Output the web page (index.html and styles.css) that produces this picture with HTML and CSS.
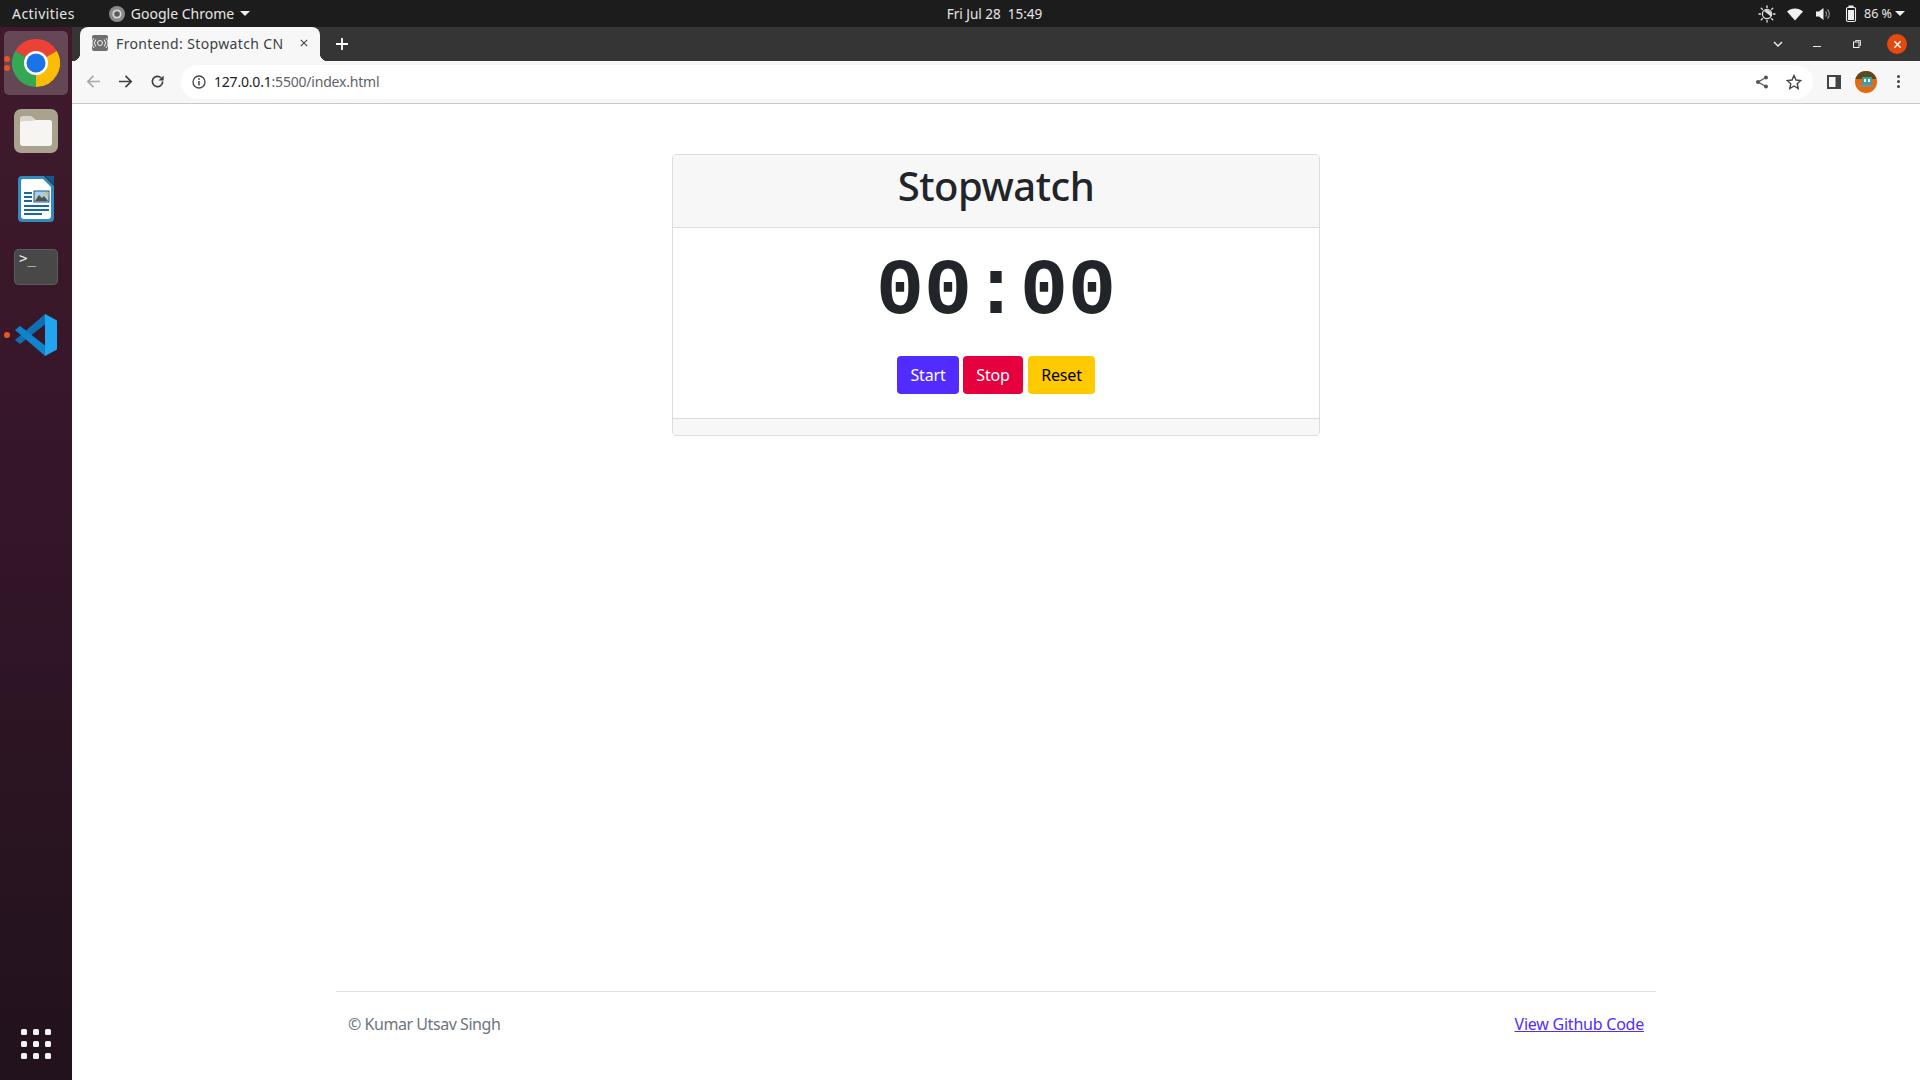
FILE: index.html
```html
<!DOCTYPE html>
<html lang="en">
<head>
<meta charset="utf-8">
<title>Frontend: Stopwatch CN</title>
<link rel="stylesheet" href="styles.css">
</head>
<body>
<header class="topbar">
  <div class="top-left">
    <span class="activities">Activities</span>
    <span class="app-menu">
      <svg class="app-icon" viewBox="0 0 16 16"><circle cx="8" cy="8" r="8" fill="#8a8a8a"/><circle cx="8" cy="8" r="4.600" fill="#d8d8d8"/><circle cx="8" cy="8" r="2.800" fill="#5a5a5a"/></svg>
      Google Chrome
      <i class="caret"></i>
    </span>
  </div>
  <div class="clock">Fri Jul 28&nbsp;&nbsp;15:49</div>
  <div class="tray">
    <svg class="tray-icon" viewBox="0 0 18 18"><g stroke="#ddd" stroke-width="1.400" stroke-linecap="round"><path d="M9 1v1.500M9 15.500v1.500M1 9h1.500M15.500 9H17M3.300 3.300l1 1M13.700 13.700l1 1M3.300 14.700l1-1M13.700 4.300l1-1"/></g><circle cx="9" cy="9" r="4.600" fill="none" stroke="#ddd" stroke-width="1.300"/><path d="M6 6a4.600 4.600 0 0 1 7 5.500z" fill="#ddd"/></svg>
    <svg class="tray-icon" viewBox="0 0 18 18"><path d="M1 6.500C5.500 2.500 12.500 2.500 17 6.500L9 15.500z" fill="#f2f2f2"/></svg>
    <svg class="tray-icon" viewBox="0 0 18 18"><path d="M2 6.500h3L9.500 3v12L5 11.500H2z" fill="#eee"/><path d="M11.500 6.500a3.500 3.500 0 0 1 0 5M13.500 4.500a6.500 6.500 0 0 1 0 9" fill="none" stroke="#999" stroke-width="1.100"/></svg>
    <svg class="tray-icon" viewBox="0 0 18 18"><rect x="6.500" y="0.500" width="5" height="2" fill="#eee"/><rect x="4.500" y="2.500" width="9" height="14" rx="1.500" fill="none" stroke="#eee" stroke-width="1.100"/><rect x="6" y="5" width="6" height="10" fill="#eee"/></svg>
    <span class="battery">86 %</span>
    <i class="caret"></i>
  </div>
</header>

<div class="desktop">
  <nav class="dock">
    <div class="dock-apps">
      <div class="dock-item dock-active">
        <span class="pips"><i></i><i></i></span>
        <svg class="chrome-logo" viewBox="0 0 48 48">
          <path d="M24 24 L44.800 12 A24 24 0 0 0 3.200 12z" fill="#ea4335"/>
          <path d="M24 24 L3.200 12 A24 24 0 0 0 24 48z" fill="#34a853"/>
          <path d="M24 24 L24 48 A24 24 0 0 0 44.800 12z" fill="#fbbc04"/>
          <circle cx="24" cy="24" r="12" fill="#fff"/>
          <circle cx="24" cy="24" r="9.500" fill="#1a73e8"/>
        </svg>
      </div>
      <div class="dock-item">
        <svg class="files-logo" viewBox="0 0 44 44">
          <rect width="44" height="44" rx="7" fill="#a8a28f"/>
          <path d="M6 10a3 3 0 0 1 3-3h8l5 4h13a3 3 0 0 1 3 3v6H6z" fill="#d9d5c9"/>
          <path d="M6 15a3 3 0 0 1 3-3h9l4-1h13a3 3 0 0 1 3 3v20a3 3 0 0 1-3 3H9a3 3 0 0 1-3-3z" fill="#f6f5f2"/>
        </svg>
      </div>
      <div class="dock-item">
        <svg class="writer-logo" viewBox="0 0 36 46">
          <path d="M4 0h22l10 10v32a4 4 0 0 1-4 4H4a4 4 0 0 1-4-4V4a4 4 0 0 1 4-4z" fill="#2f8cbd"/>
          <path d="M5 3h20l8 8v29a3 3 0 0 1-3 3H6a3 3 0 0 1-3-3V5a2 2 0 0 1 2-2z" fill="#fff"/>
          <path d="M27 0h9v9z" fill="#185a85"/>
          <g fill="#18699c">
            <rect x="6" y="16" width="8" height="2"/><rect x="6" y="20" width="8" height="2"/><rect x="6" y="24" width="8" height="2"/>
            <rect x="6" y="29" width="25" height="2"/><rect x="6" y="33" width="25" height="2"/><rect x="6" y="37" width="18" height="2"/>
          </g>
          <rect x="16" y="15" width="15" height="11" fill="#a8cfe4" stroke="#185a85"/>
          <path d="M17 25l4-6 3 3 2-2 4 5z" fill="#57504a"/>
          <path d="M27 16h3.500v4z" fill="#e8b93c"/>
        </svg>
      </div>
      <div class="dock-item">
        <div class="terminal-logo">&gt;_</div>
      </div>
      <div class="dock-item">
        <span class="pips pips-single"><i></i></span>
        <svg class="vscode-logo" viewBox="0 0 42 42">
          <path d="M30 0v10.500L5 30 0 26z" fill="#0f6fb0"/>
          <path d="M0 16l5-4 25 19.500V42z" fill="#0f84cc"/>
          <path d="M30 0l12 6.500v29L30 42z" fill="#22a5ef"/>
        </svg>
      </div>
    </div>
    <div class="app-grid"><i></i><i></i><i></i><i></i><i></i><i></i><i></i><i></i><i></i></div>
  </nav>

  <div class="browser">
    <div class="tabstrip">
      <div class="tab">
        <svg class="favicon" viewBox="0 0 16 16"><rect width="16" height="16" rx="2" fill="#6e6e6e"/><g fill="none" stroke="#eee" stroke-width="1"><circle cx="8" cy="8" r="2.500"/><path d="M3.800 4.500a5.500 5.500 0 0 0 0 7M12.200 4.500a5.500 5.500 0 0 1 0 7M2 3a8 8 0 0 0 0 10M14 3a8 8 0 0 1 0 10"/></g></svg>
        <span class="tab-title">Frontend: Stopwatch CN</span>
        <svg class="tab-close" viewBox="0 0 10 10"><path d="M1 1l8 8M9 1l-8 8" stroke="#444" stroke-width="1.400"/></svg>
      </div>
      <svg class="new-tab" viewBox="0 0 12 12"><path d="M6 0v12M0 6h12" stroke="#fff" stroke-width="1.800"/></svg>
      <div class="win-controls">
        <svg class="win-chevron" viewBox="0 0 10 6"><path d="M1 1l4 4 4-4" fill="none" stroke="#e8e8e8" stroke-width="1.500"/></svg>
        <span class="win-min"></span>
        <svg class="win-restore" viewBox="0 0 8 8"><path d="M2.500 1.500V.5h5v5h-1" fill="none" stroke="#ddd"/><rect x=".5" y="2" width="5.500" height="5.500" fill="none" stroke="#eee"/></svg>
        <span class="win-close"><svg viewBox="0 0 10 10"><path d="M1.500 1.500l7 7M8.500 1.500l-7 7" stroke="#fff" stroke-width="1.500"/></svg></span>
      </div>
    </div>

    <div class="toolbar">
      <svg class="tool-icon dim" viewBox="0 0 16 16"><path d="M15 8H2M8 2L2 8l6 6" fill="none" stroke="currentColor" stroke-width="1.800"/></svg>
      <svg class="tool-icon" viewBox="0 0 16 16"><path d="M1 8h13M8 2l6 6-6 6" fill="none" stroke="currentColor" stroke-width="1.800"/></svg>
      <svg class="tool-icon" viewBox="0 0 16 16"><path d="M13.500 8A5.500 5.500 0 1 1 11.800 4" fill="none" stroke="currentColor" stroke-width="1.800"/><path d="M14.500 1.500V7H9z" fill="currentColor"/></svg>
      <div class="omnibox">
        <svg class="info-icon" viewBox="0 0 14 14"><circle cx="7" cy="7" r="6" fill="none" stroke="#444" stroke-width="1.300"/><path d="M7 6v4.500" stroke="#444" stroke-width="1.500"/><circle cx="7" cy="4" r=".9" fill="#444"/></svg>
        <span class="url"><b>127.0.0.1</b>:5500/index.html</span>
        <svg class="omni-share" viewBox="0 0 14 14"><path d="M11 2.500L3 7l8 4.500" fill="none" stroke="#555" stroke-width="1.200"/><circle cx="11" cy="2.500" r="2" fill="#555"/><circle cx="3" cy="7" r="2" fill="#555"/><circle cx="11" cy="11.500" r="2" fill="#555"/></svg>
        <svg class="omni-star" viewBox="0 0 16 16"><path d="M8 1.500l2 4.500 4.800.5-3.600 3.200 1 4.800L8 12l-4.200 2.500 1-4.800L1.200 6.500 6 6z" fill="none" stroke="#444" stroke-width="1.400"/></svg>
      </div>
      <svg class="panel-icon" viewBox="0 0 14 14"><path d="M0 0h14v14H0z M2 2v10h6.500V2z" fill="#444" fill-rule="evenodd"/></svg>
      <svg class="avatar" viewBox="0 0 22 22"><defs><clipPath id="av"><circle cx="11" cy="11" r="11"/></clipPath></defs><g clip-path="url(#av)"><rect width="22" height="22" fill="#e8690c"/><rect width="22" height="8" fill="#5a4a22"/><rect x="7" y="6" width="10" height="9" fill="#3f9ea0"/><rect x="9" y="8" width="2" height="3" fill="#fff"/><rect x="13" y="8" width="2" height="3" fill="#fff"/><rect x="3" y="14" width="16" height="2" fill="#8d8a80"/></g></svg>
      <span class="kebab"><i></i><i></i><i></i></span>
    </div>

    <main class="page">
      <section class="card">
        <div class="card-header"><h1>Stopwatch</h1></div>
        <div class="card-body">
          <div class="time">00:00</div>
          <div class="actions">
            <button class="btn btn-start">Start</button>
            <button class="btn btn-stop">Stop</button>
            <button class="btn btn-reset">Reset</button>
          </div>
        </div>
        <div class="card-footer"></div>
      </section>
      <footer class="site-footer">
        <span class="copy">© Kumar Utsav Singh</span>
        <a class="code-link" href="#">View Github Code</a>
      </footer>
    </main>
  </div>
</div>
</body>
</html>
```
FILE: styles.css
```css
* { box-sizing: border-box; }
html, body { height: 100%; margin: 0; }
body {
  display: flex;
  flex-direction: column;
  height: 1080px;
  overflow: hidden;
  font-family: "Noto Sans", "Open Sans", sans-serif;
  color: #212529;
  background: #fff;
}
.topbar {
  height: 27px;
  flex: none;
  background: #1c1c1c;
  color: #e6e6e6;
  font-size: 14px;
  display: grid;
  grid-template-columns: 1fr auto 1fr;
  align-items: center;
  padding: 0 15px 0 12px;
}
.top-left { display: flex; align-items: center; gap: 34px; }
.activities { letter-spacing: .45px; }
.app-menu { display: flex; align-items: center; gap: 6px; }
.app-icon { width: 16px; height: 16px; }
.caret {
  display: inline-block;
  width: 0;
  height: 0;
  border-left: 5px solid transparent;
  border-right: 5px solid transparent;
  border-top: 5px solid #eee;
}
.clock { text-align: center; transform: translateX(36px); font-size: 13.500px; }
.tray { display: flex; justify-content: flex-end; align-items: center; gap: 10px; }
.tray-icon { width: 18px; height: 18px; }
.battery { font-size: 12.500px; margin-left: -6px; margin-right: -7px; }

.desktop { flex: 1; display: flex; min-height: 0; }
.dock {
  width: 72px;
  flex: none;
  background: linear-gradient(180deg, #3f1a2c 0%, #341628 45%, #21121d 100%);
  display: flex;
  flex-direction: column;
  justify-content: space-between;
  align-items: center;
  padding: 4px 0 21px;
}
.dock-apps { display: flex; flex-direction: column; align-items: center; }
.dock-item {
  width: 64px;
  height: 68px;
  display: flex;
  align-items: center;
  justify-content: center;
  position: relative;
}
.dock-active { height: 64px; margin-bottom: 2px; background: rgba(255,255,255,.2); border-radius: 5px; }
.pips {
  position: absolute;
  left: 0;
  top: 25px;
  display: flex;
  flex-direction: column;
  gap: 3px;
}
.pips i { width: 6px; height: 6px; border-radius: 50%; background: #e95420; display: block; }
.pips-single { top: 31px; left: 0; }
.chrome-logo { width: 48px; height: 48px; }
.files-logo { width: 44px; height: 44px; }
.writer-logo { width: 36px; height: 46px; }
.terminal-logo {
  width: 44px;
  height: 36px;
  border-radius: 5px;
  background: #484848;
  color: #f2f2f2;
  font: 14px/16px "DejaVu Sans Mono", monospace;
  padding: 1px 5px;
  box-shadow: inset 0 0 0 1px #5c5c5c;
}
.vscode-logo { width: 42px; height: 42px; }
.app-grid {
  display: grid;
  grid-template-columns: repeat(3, 6px);
  gap: 6px;
}
.app-grid i { width: 6px; height: 6px; background: #f2f2f2; border-radius: 1.500px; }

.browser { flex: 1; display: flex; flex-direction: column; min-width: 0; }
.tabstrip {
  height: 34px;
  flex: none;
  background: #353535;
  display: flex;
  align-items: stretch;
  padding-left: 8px;
}
.tab {
  position: relative;
  width: 240px;
  background: #f7f7f7;
  border-radius: 8px 8px 0 0;
  display: flex;
  align-items: center;
  padding: 0 12px 2px;
  color: #3c4043;
  font-size: 14px;
}
.tab::before, .tab::after {
  content: "";
  position: absolute;
  bottom: 0;
  width: 8px;
  height: 8px;
}
.tab::before { left: -8px; background: radial-gradient(circle at 0 0, transparent 8px, #f7f7f7 8.500px); }
.tab::after { right: -8px; background: radial-gradient(circle at 100% 0, transparent 8px, #f7f7f7 8.500px); }
.favicon { width: 16px; height: 16px; flex: none; margin-right: 8px; }
.tab-title { flex: 1; white-space: nowrap; overflow: hidden; letter-spacing: .37px; }
.tab-close { width: 8px; height: 8px; flex: none; }
.new-tab { width: 12px; height: 12px; align-self: center; margin-left: 16px; }
.win-controls { margin-left: auto; display: flex; align-items: center; padding-right: 13px; }
.win-chevron { width: 10px; height: 6px; margin-right: 30px; }
.win-min { width: 8px; height: 1px; background: #eee; margin-right: 32px; margin-top: 4px; }
.win-restore { width: 8px; height: 8px; margin-right: 26px; }
.win-close {
  width: 20px;
  height: 20px;
  border-radius: 50%;
  background: #e6490f;
  display: flex;
  align-items: center;
  justify-content: center;
}
.win-close svg { width: 9px; height: 9px; }

.toolbar {
  height: 43px;
  flex: none;
  background: #f7f7f7;
  border-bottom: 1px solid #c9c9c9;
  display: flex;
  align-items: center;
  padding: 0 0 1px 14px;
  color: #3f3f3f;
}
.tool-icon { width: 15px; height: 15px; margin-right: 17px; flex: none; }
.tool-icon.dim { color: #a8a8a8; }
.omnibox {
  width: 1632px;
  height: 34px;
  margin-left: -1px;
  flex: none;
  background: #fff;
  border-radius: 17px;
  display: flex;
  align-items: center;
  padding-left: 11px;
  font-size: 14px;
}
.info-icon { width: 14px; height: 14px; margin-right: 8px; }
.url { color: #5f6368; flex: 1; letter-spacing: -.2px; }
.url b { color: #202124; font-weight: 400; }
.omni-share { width: 14px; height: 14px; margin-right: 17px; }
.omni-star { width: 16px; height: 16px; margin-right: 11px; }
.panel-icon { width: 14px; height: 14px; margin-left: 14px; flex: none; }
.avatar { width: 22px; height: 22px; margin-left: 14px; flex: none; }
.kebab { display: flex; flex-direction: column; gap: 2px; margin-left: 20px; }
.kebab i { width: 3px; height: 3px; background: #444; border-radius: 50%; display: block; }

.page {
  flex: 1;
  background: #fff;
  display: flex;
  flex-direction: column;
  align-items: center;
  padding-top: 50px;
}
.card {
  width: 648px;
  border: 1px solid #dcdcdc;
  border-radius: 4px;
  overflow: hidden;
}
.card-header {
  height: 73px;
  background: #f7f7f7;
  border-bottom: 1px solid #dcdcdc;
  text-align: center;
}
h1 { margin: 0; font-size: 40px; font-weight: 500; line-height: 62px; letter-spacing: -.5px; }
.card-body { text-align: center; height: 190px; padding-top: 16px; }
.time {
  font-family: "Liberation Mono", monospace;
  font-weight: 700;
  font-size: 80px;
  line-height: 96px;
}
.actions { display: flex; justify-content: center; gap: 4px; margin-top: 16px; }
.btn {
  height: 38px;
  border: 0;
  border-radius: 4px;
  padding: 0;
  font: 16px "Noto Sans", sans-serif;
  letter-spacing: -.2px;
}
.btn-start { background: #512bff; color: #fff; width: 62px; }
.btn-stop { background: #e6003e; color: #fff; width: 60px; }
.btn-reset { background: #ffcb00; color: #000; width: 67px; margin-left: 1px; }
.card-footer { height: 17px; background: #f7f7f7; border-top: 1px solid #dcdcdc; }

.site-footer {
  margin-top: auto;
  width: 1320px;
  height: 89px;
  border-top: 1px solid #dee2e6;
  display: flex;
  justify-content: space-between;
  padding: 20px 12px 0;
  font-size: 16px;
  line-height: 24px;
}
.copy { color: #6c757d; letter-spacing: -.45px; }
.code-link { color: #512bff; letter-spacing: -.23px; }
```
